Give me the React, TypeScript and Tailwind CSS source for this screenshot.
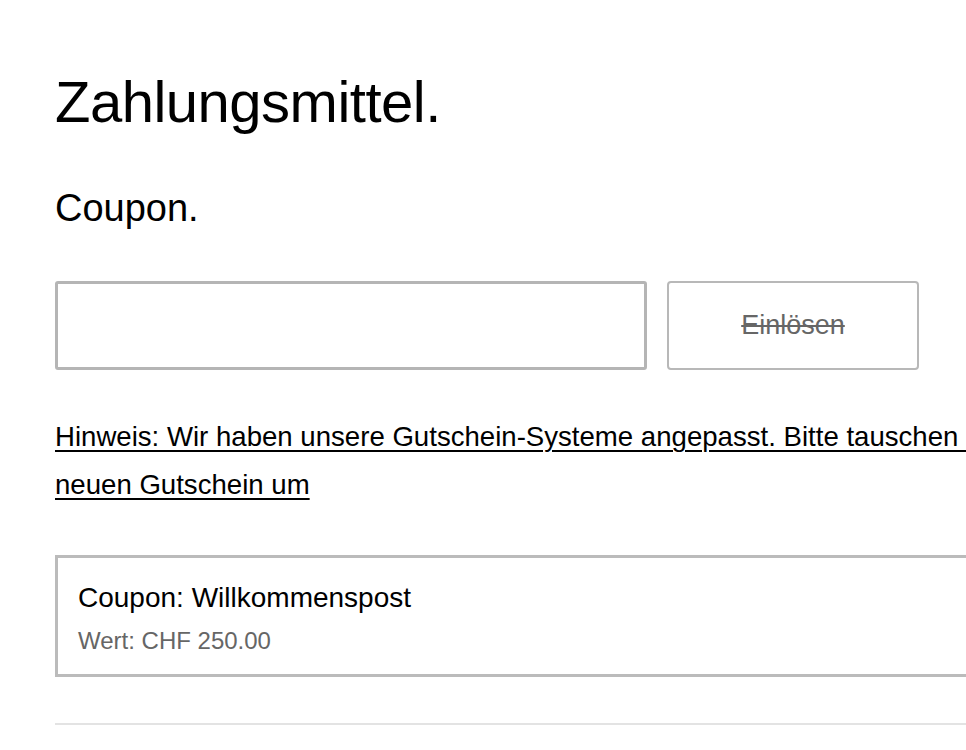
export default function App() {
    return (
        <div className="h-[750px] w-[966px] overflow-hidden bg-white font-['Liberation_Sans',Arial,sans-serif] text-black">
            <div className="w-[1200px] pl-[55px] pt-[66px]">
                <h1 className="text-[58px] leading-[72px] tracking-[-0.5px]">Zahlungsmittel.</h1>

                <h2 className="mt-[48px] text-[38px] leading-[44px]">Coupon.</h2>

                <div className="mt-[51px] flex gap-[20px]">
                    <input
                        type="text"
                        className="h-[89px] w-[592px] rounded-[3px] border-[3px] border-[#b5b5b5] px-4 text-[22px] outline-none"
                    />
                    <button className="h-[89px] w-[252px] rounded-[4px] border-2 border-[#b8b8b8] text-[27px] text-[#666] line-through">
                        Einlösen
                    </button>
                </div>

                <p className="mt-[43px] whitespace-nowrap text-[27.6px] leading-[48px] underline decoration-2 underline-offset-[4px]">
                    Hinweis: Wir haben unsere Gutschein-Systeme angepasst. Bitte tauschen Sie Ihren alten Gutschein
                    <br />
                    neuen Gutschein um
                </p>

                <div className="mt-[46px] border-[3px] border-[#bbbbbb] px-[20px] pb-[19px] pt-[24px]">
                    <div className="text-[28px] leading-[32px]">Coupon: Willkommenspost</div>
                    <div className="mt-[13px] text-[24px] leading-[28px] text-[#666]">Wert: CHF 250.00</div>
                </div>

                <div className="mt-[46px] h-[2px] bg-[#e3e3e3]" />
            </div>
        </div>
    )
}
